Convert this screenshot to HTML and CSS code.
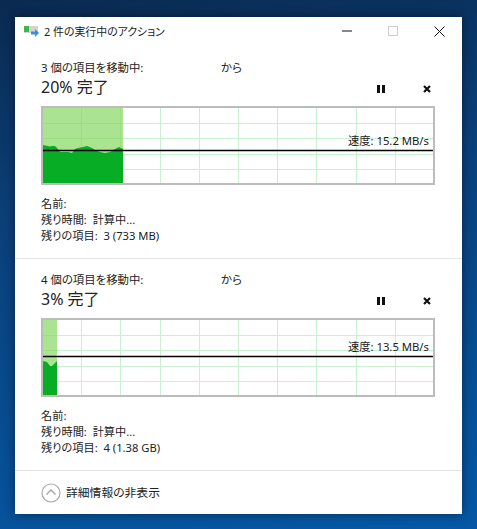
FILE: index.html

```html
<!DOCTYPE html>
<html lang="ja">
<head>
  <meta charset="UTF-8" />
  <meta name="viewport" content="width=device-width, initial-scale=1.0"/>
  <title>2 件の実行中のアクション</title>
  <link rel="stylesheet" href="styles.css">
</head>
<body>
  <div class="window">
    <div class="titlebar">
      <svg class="app-icon" width="15" height="11" viewBox="0 0 15 11">
        <rect x="0" y="0" width="14" height="7" fill="#d4d4d4"/>
        <rect x="0" y="0" width="5" height="6" fill="#3fb54a"/>
        <path d="M7 5.500h4V3l4 4-4 4V8.500H7z" fill="#3a8fdc"/>
      </svg>
      <span class="title">2 件の実行中のアクション</span>
      <div class="win-buttons">
        <div class="win-btn">
          <svg width="10" height="10" viewBox="0 0 10 10"><path d="M0 5h10" stroke="#111" stroke-width="1"/></svg>
        </div>
        <div class="win-btn">
          <svg width="10" height="10" viewBox="0 0 10 10"><rect x="0.5" y="0.5" width="9" height="9" fill="none" stroke="#ccc"/></svg>
        </div>
        <div class="win-btn">
          <svg width="11" height="11" viewBox="0 0 11 11"><path d="M0.5 0.5l10 10M10.5 0.5l-10 10" stroke="#111" stroke-width="1"/></svg>
        </div>
      </div>
    </div>

    <section class="job">
      <div class="job-head">
        <span class="job-count">3 個の項目を移動中:</span>
        <span class="job-from">から</span>
      </div>
      <div class="job-progress">
        <span class="percent">20% 完了</span>
        <div class="job-actions">
          <svg width="8" height="8" viewBox="0 0 8 8"><path d="M0 0h3v8H0zM5 0h3v8H5z" fill="#111"/></svg>
          <svg width="8" height="8" viewBox="0 0 8 8"><path d="M1 1l6 6M7 1l-6 6" stroke="#111" stroke-width="2.2"/></svg>
        </div>
      </div>
      <div class="graph">
        <svg width="390" height="75" viewBox="0 0 390 75">
          <path class="grid" d="M38.500 0v75M77.500 0v75M117.500 0v75M156.500 0v75M195.500 0v75M234.500 0v75M273.500 0v75M313.500 0v75M352.500 0v75M0 15.500h390M0 30.500h390M0 46.500h390M0 61.500h390"/>
          <rect class="done" x="0" y="0" width="80" height="75"/>
          <path class="done-grid" d="M38.500 0v75M77.500 0v75M0 15.500h80M0 30.500h80M0 46.500h80M0 61.500h80"/>
          <polygon class="rate" points="0,75 0,37 7,38.500 9,38 12,38 15,41 17,44 25,44 29,45 32,41 35,40 40,39 44,38 49,40 52,42 57,44 62,45 67,44 72,41 76,39 80,41 80,75"/>
          <path class="speed-line" d="M0 42.500h390"/>
        </svg>
        <span class="speed speed-first">速度: 15.2 MB/s</span>
      </div>
      <div class="details">
        <div>名前:</div>
        <div>残り時間:&nbsp; 計算中...</div>
        <div>残りの項目:&nbsp; 3 (733 MB)</div>
      </div>
    </section>

    <section class="job">
      <div class="job-head">
        <span class="job-count">4 個の項目を移動中:</span>
        <span class="job-from">から</span>
      </div>
      <div class="job-progress">
        <span class="percent">3% 完了</span>
        <div class="job-actions">
          <svg width="8" height="8" viewBox="0 0 8 8"><path d="M0 0h3v8H0zM5 0h3v8H5z" fill="#111"/></svg>
          <svg width="8" height="8" viewBox="0 0 8 8"><path d="M1 1l6 6M7 1l-6 6" stroke="#111" stroke-width="2.2"/></svg>
        </div>
      </div>
      <div class="graph">
        <svg width="390" height="75" viewBox="0 0 390 75">
          <path class="grid" d="M38.500 0v75M77.500 0v75M117.500 0v75M156.500 0v75M195.500 0v75M234.500 0v75M273.500 0v75M313.500 0v75M352.500 0v75M0 15.500h390M0 30.500h390M0 46.500h390M0 61.500h390"/>
          <rect class="done" x="0" y="0" width="14" height="75"/>
          <path class="done-grid" d="M0 15.500h14M0 30.500h14M0 46.500h14M0 61.500h14"/>
          <polygon class="rate" points="0,75 0,41 4,42 7,46 9,46 14,41 14,75"/>
          <path class="speed-line" d="M0 36.500h390"/>
        </svg>
        <span class="speed speed-second">速度: 13.5 MB/s</span>
      </div>
      <div class="details">
        <div>名前:</div>
        <div>残り時間:&nbsp; 計算中...</div>
        <div>残りの項目:&nbsp; 4 (1.38 GB)</div>
      </div>
    </section>

    <div class="footer">
      <svg width="20" height="20" viewBox="0 0 20 20">
        <circle cx="10" cy="10" r="9" fill="#fff" stroke="#a8a8a8" stroke-width="1.2"/>
        <path d="M5.500 11.500L10 7l4.500 4.500" fill="none" stroke="#a0a0a0" stroke-width="1.300"/>
      </svg>
      <span class="footer-label">詳細情報の非表示</span>
    </div>
  </div>
</body>
</html>
```

FILE: styles.css

```css
html, body {
  height: 100%;
}
body {
  margin: 0;
  padding: 17px 15px 0;
  box-sizing: border-box;
  overflow: hidden;
  background: linear-gradient(170deg, #0a2a50 0%, #0b3f78 35%, #0558a6 100%);
  font-family: "Noto Sans", "Noto Sans CJK JP", sans-serif;
  font-feature-settings: "palt";
  font-size: 11.2px;
  color: #222;
}
.window {
  width: 447px;
  height: 497px;
  background-color: #fff;
  box-shadow: 0 0 10px rgba(0, 0, 0, 0.45);
  display: flex;
  flex-direction: column;
}
.titlebar {
  display: flex;
  align-items: center;
  height: 28px;
  margin-bottom: 2px;
  padding-left: 9px;
}
.app-icon {
  margin-right: 5px;
}
.title {
  flex: 1;
  font-size: 10.9px;
}
.win-buttons {
  display: flex;
}
.win-btn {
  width: 46px;
  height: 28px;
  display: flex;
  align-items: center;
  justify-content: center;
}
.job {
  padding: 12px 27px 14px 26px;
  border-bottom: 1px solid #e5e5e5;
}
.job-head {
  display: flex;
  height: 16px;
  line-height: 17px;
  font-size: 11.4px;
}
.job-count {
  width: 180px;
}
.job-progress {
  display: flex;
  justify-content: space-between;
  align-items: center;
  height: 22px;
  margin-top: 1px;
}
.percent {
  font-size: 16px;
  line-height: 22px;
}
.job-actions {
  display: flex;
  gap: 38px;
  padding: 4px 4px 0 0;
}
.graph {
  position: relative;
  margin-top: 8px;
  width: 390px;
  height: 75px;
  border: 2px solid #bcbcbc;
}
.graph svg {
  display: block;
}
.grid {
  fill: none;
  stroke: #c9f0d2;
}
.done {
  fill: #abe490;
}
.done-grid {
  fill: none;
  stroke: #9bde80;
}
.rate {
  fill: #07ad25;
}
.speed-line {
  stroke: #000;
  stroke-width: 1.3;
}
.speed {
  position: absolute;
  right: 4px;
  line-height: 16px;
  font-size: 11.3px;
  white-space: nowrap;
}
.speed-first {
  top: 25px;
}
.speed-second {
  top: 19px;
}
.details {
  margin-top: 11px;
  line-height: 16px;
}
.footer {
  flex: 1;
  display: flex;
  align-items: center;
  gap: 5px;
  padding-left: 26px;
}
.footer-label {
  font-size: 11.8px;
  margin-bottom: 2px;
}
```
